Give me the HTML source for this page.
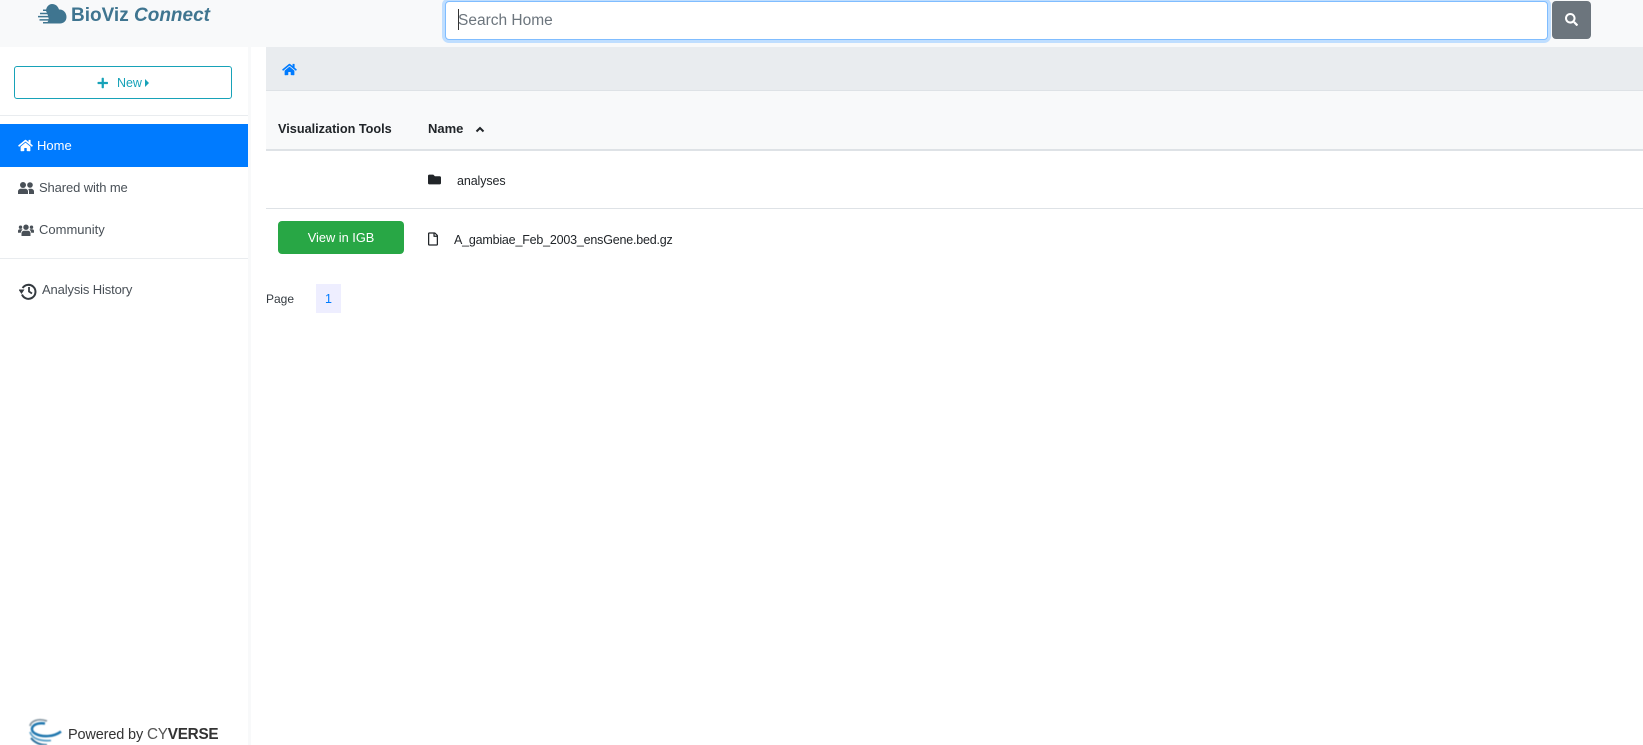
<!DOCTYPE html>
<html lang="en"><head><meta charset="utf-8"><title>BioViz Connect</title>
<style>
html,body{margin:0;padding:0;width:1643px;height:745px;overflow:hidden;background:#fff;font-family:"Liberation Sans",sans-serif;color:#212529}
.a{position:absolute}
.t{position:absolute;white-space:nowrap;font-size:13px;line-height:20px;height:20px}
svg{position:absolute;display:block}
</style></head><body>
<div class="a" style="left:0;top:0;width:1643px;height:47px;background:#f8f9fa"></div>
<!-- logo -->
<svg style="left:37px;top:3px;filter:blur(.35px)" width="30" height="22" viewBox="0 0 30 22" fill="#3f7590"><path d="M9 8C9 4 12 1 15 1 19 1 21 3.500 22 6.500 26 6 29.500 9.500 29.500 14 29.500 18 26.500 20.500 23 20.500H9C11 19 12 17 11.500 15 11 12 10 10 9 8Z"/><path d="M6 6.500H12V8H6ZM3 9.700H13V11.200H3ZM1 12.900H14V14.400H1ZM2.500 16.100H14V17.600H2.500ZM6 19H14V20.500H6Z"/></svg>
<div class="t" style="left:71px;top:5px;font-size:19px;line-height:22px;height:22px;font-weight:bold;color:#3f7590;filter:blur(.25px)">BioViz <i>Connect</i></div>
<!-- search -->
<div class="a" style="left:445px;top:1px;width:1101px;height:37px;background:#fff;border:1px solid #80bdff;border-radius:4px;box-shadow:0 0 0 3px #bfdeff"></div>
<div class="a" style="left:458px;top:9px;width:1px;height:21px;background:#333"></div>
<div class="t" style="left:458px;top:9px;font-size:15.500px;line-height:24px;height:24px;color:#6c757d">Search Home</div>
<div class="a" style="left:1552px;top:1px;width:39px;height:38px;background:#6c757d;border-radius:4px"></div>
<svg style="left:1565px;top:13px" width="13" height="13" viewBox="0 0 512 512" fill="#fff"><path d="M505 442.700L405.300 343c-4.500-4.500-10.600-7-17-7H372c27.600-35.300 44-79.700 44-128C416 93.100 322.900 0 208 0S0 93.100 0 208s93.100 208 208 208c48.300 0 92.700-16.400 128-44v16.300c0 6.400 2.500 12.500 7 17l99.700 99.700c9.400 9.400 24.600 9.400 33.900 0l28.300-28.300c9.400-9.400 9.400-24.600.1-34zM208 336c-70.700 0-128-57.200-128-128 0-70.700 57.200-128 128-128 70.700 0 128 57.200 128 128 0 70.700-57.200 128-128 128z"/></svg>
<!-- sidebar -->
<div class="a" style="left:248px;top:47px;width:2.500px;height:698px;background:#f8f9fa"></div>
<div class="a" style="left:14px;top:66px;width:216px;height:31px;border:1px solid #17a2b8;border-radius:3px"></div>
<svg style="left:97px;top:77px" width="11.500" height="12" viewBox="0 0 448 512" fill="#17a2b8"><path d="M416 208H272V64c0-17.670-14.330-32-32-32h-32c-17.670 0-32 14.330-32 32v144H32c-17.670 0-32 14.330-32 32v32c0 17.670 14.330 32 32 32h144v144c0 17.670 14.330 32 32 32h32c17.670 0 32-14.330 32-32V304h144c17.670 0 32-14.330 32-32v-32c0-17.670-14.330-32-32-32z"/></svg>
<div class="t" style="left:117px;top:73px;color:#17a2b8;font-size:12.500px;letter-spacing:-.05px">New</div>
<svg style="left:145px;top:79px" width="4" height="8" viewBox="0 0 4 8" fill="#17a2b8"><path d="M0 0L4 4 0 8Z"/></svg>
<div class="a" style="left:0;top:115px;width:248px;height:1px;background:#e9ecef"></div>
<div class="a" style="left:0;top:124px;width:248px;height:43px;background:#007bff"></div>
<svg style="left:18px;top:139px" width="15" height="13" viewBox="0 0 576 512" fill="#fff"><path d="M280.370 148.260L96 300.110V464a16 16 0 0 0 16 16l112.060-.29a16 16 0 0 0 15.920-16V368a16 16 0 0 1 16-16h64a16 16 0 0 1 16 16v95.640a16 16 0 0 0 16 16.050L464 480a16 16 0 0 0 16-16V300L295.670 148.260a12.190 12.190 0 0 0-15.300 0zM571.600 251.470L488 182.560V44.050a12 12 0 0 0-12-12h-56a12 12 0 0 0-12 12v72.610L318.470 43a48 48 0 0 0-61 0L4.340 251.470a12 12 0 0 0-1.600 16.900l25.500 31A12 12 0 0 0 45.150 301l235.220-193.740a12.190 12.190 0 0 1 15.300 0L530.900 301a12 12 0 0 0 16.900-1.600l25.500-31a12 12 0 0 0-1.700-16.930z"/></svg>
<div class="t" style="left:37px;top:136px;color:#fff">Home</div>
<svg style="left:18px;top:182px" width="16" height="12" viewBox="0 0 16 12" fill="#495057"><circle cx="5" cy="3" r="3"/><circle cx="12" cy="3" r="2.800"/><path d="M0 12V9.500C0 7.800 1.500 6.800 3 6.800H7C8.700 6.800 10 7.800 10 9.500V12Z"/><path d="M11 12V9.500C11 8.500 10.700 7.700 10.200 7.200 10.800 6.900 11.500 6.800 12.500 6.800 14.500 6.800 16 7.800 16 9.500V12Z"/></svg>
<div class="t" style="left:39px;top:178px;color:#495057;letter-spacing:-.12px">Shared with me</div>
<svg style="left:18px;top:224px" width="16" height="12" viewBox="0 0 16 12" fill="#495057"><circle cx="8" cy="3.200" r="2.700"/><circle cx="2.500" cy="3.200" r="1.700"/><circle cx="13.500" cy="3.200" r="1.700"/><path d="M3.500 12V9.500C3.500 7.500 5 6.800 6 6.800H10C11 6.800 12.500 7.500 12.500 9.500V12Z"/><path d="M0 8.800V7C0 5.800 1 5.300 2 5.300H3.500C4 5.300 4.200 5.500 4.500 5.800 3.500 6.500 3 7.500 2.800 8.800ZM16 8.800V7C16 5.800 15 5.300 14 5.300H12.500C12 5.300 11.800 5.500 11.500 5.800 12.500 6.500 13 7.500 13.200 8.800Z"/></svg>
<div class="t" style="left:39px;top:220px;color:#495057">Community</div>
<div class="a" style="left:0;top:258px;width:248px;height:1px;background:#e9ecef"></div>
<svg style="left:19px;top:282px" width="18" height="18" viewBox="0 0 18 18" fill="none" stroke="#343a40"><path d="M3.600 6A7 7 0 1 1 3 12.500" stroke-width="2"/><path d="M0 6.500H6L3 11Z" fill="#343a40" stroke="none" transform="translate(-.5 1)"/><path d="M10 5V9.500L13 11.500" stroke-width="1.800"/></svg>
<div class="t" style="left:42px;top:280px;color:#495057;letter-spacing:-.14px">Analysis History</div>
<!-- cyverse -->
<svg style="left:27px;top:718px;filter:blur(.6px)" width="36" height="27" viewBox="0 0 36 27" fill="none"><path d="M20 3C11 0 4 3 3 8" stroke="#8a9aa5" stroke-width="1.800"/><path d="M34 13.500C27 19 15 19.500 8 15.500 4 13 4 9.500 7.500 7 10 5.500 14 5 18 5.500" stroke="#2077ae" stroke-width="2.500"/><path d="M3 14C5 20 12 23.500 24 22.500" stroke="#5aa0c8" stroke-width="1.800"/><path d="M4 20C8 25 14 27 20 27" stroke="#2c6f9b" stroke-width="2"/></svg>
<div class="t" style="left:68px;top:725px;font-size:14.500px;color:#333;filter:blur(.3px);letter-spacing:-.15px">Powered by</div>
<div class="t" style="left:147px;top:725px;font-size:15.300px;color:#333;filter:blur(.3px);letter-spacing:-.25px"><span style="font-weight:normal;color:#555">CY</span><b>VERSE</b></div>
<!-- breadcrumb -->
<div class="a" style="left:266px;top:47px;width:1377px;height:43px;background:#e9ecef;border-bottom:1px solid #dee2e6"></div>
<svg style="left:282px;top:63px" width="15" height="13" viewBox="0 0 576 512" fill="#007bff"><path d="M280.370 148.260L96 300.110V464a16 16 0 0 0 16 16l112.060-.29a16 16 0 0 0 15.920-16V368a16 16 0 0 1 16-16h64a16 16 0 0 1 16 16v95.640a16 16 0 0 0 16 16.050L464 480a16 16 0 0 0 16-16V300L295.670 148.260a12.190 12.190 0 0 0-15.300 0zM571.600 251.470L488 182.560V44.050a12 12 0 0 0-12-12h-56a12 12 0 0 0-12 12v72.610L318.470 43a48 48 0 0 0-61 0L4.340 251.470a12 12 0 0 0-1.600 16.900l25.500 31A12 12 0 0 0 45.150 301l235.220-193.740a12.190 12.190 0 0 1 15.300 0L530.900 301a12 12 0 0 0 16.900-1.600l25.500-31a12 12 0 0 0-1.700-16.930z"/></svg>
<!-- table -->
<div class="a" style="left:266px;top:91px;width:1377px;height:58px;background:#f8f9fa;border-bottom:2px solid #dee2e6"></div>
<div class="t" style="left:278px;top:119px;font-weight:bold;font-size:12.700px;color:#212529">Visualization Tools</div>
<div class="t" style="left:428px;top:119px;font-weight:bold;color:#212529">Name</div>
<svg style="left:475px;top:126px" width="10" height="7" viewBox="0 0 10 7" fill="none" stroke="#212529" stroke-width="2"><path d="M1.500 5.500L5 2 8.500 5.500"/></svg>
<svg style="left:428px;top:173px" width="13" height="13" viewBox="0 0 512 512" fill="#212529"><path d="M464 128H272l-64-64H48C21.490 64 0 85.490 0 112v288c0 26.510 21.490 48 48 48h416c26.510 0 48-21.490 48-48V176c0-26.510-21.490-48-48-48z"/></svg>
<div class="t" style="left:457px;top:171px;font-size:12.500px;letter-spacing:-.1px">analyses</div>
<div class="a" style="left:266px;top:208px;width:1377px;height:1px;background:#dee2e6"></div>
<div class="a" style="left:278px;top:221px;width:126px;height:33px;background:#28a745;border-radius:4px"></div>
<div class="t" style="left:278px;top:228px;width:126px;text-align:center;color:#fff;font-size:12.800px">View in IGB</div>
<svg style="left:428px;top:232px" width="10" height="14" viewBox="0 0 384 512" fill="#212529"><path d="M369.900 97.900L286 14C277 5 264.800-.1 252.100-.1H48C21.500 0 0 21.500 0 48v416c0 26.500 21.500 48 48 48h288c26.500 0 48-21.500 48-48V131.900c0-12.700-5.100-25-14.100-34zM332.100 128H256V51.900l76.100 76.100zM48 464V48h160v104c0 13.300 10.700 24 24 24h104v288H48z"/></svg>
<div class="t" style="left:454px;top:230px;font-size:12.500px;letter-spacing:-.2px">A_gambiae_Feb_2003_ensGene.bed.gz</div>
<div class="t" style="left:266px;top:289px;color:#343a40;font-size:12px">Page</div>
<div class="a" style="left:316px;top:284px;width:25px;height:29px;background:#eef"></div>
<div class="t" style="left:316px;top:289px;width:25px;text-align:center;color:#007bff;font-size:12.500px">1</div>
</body></html>
